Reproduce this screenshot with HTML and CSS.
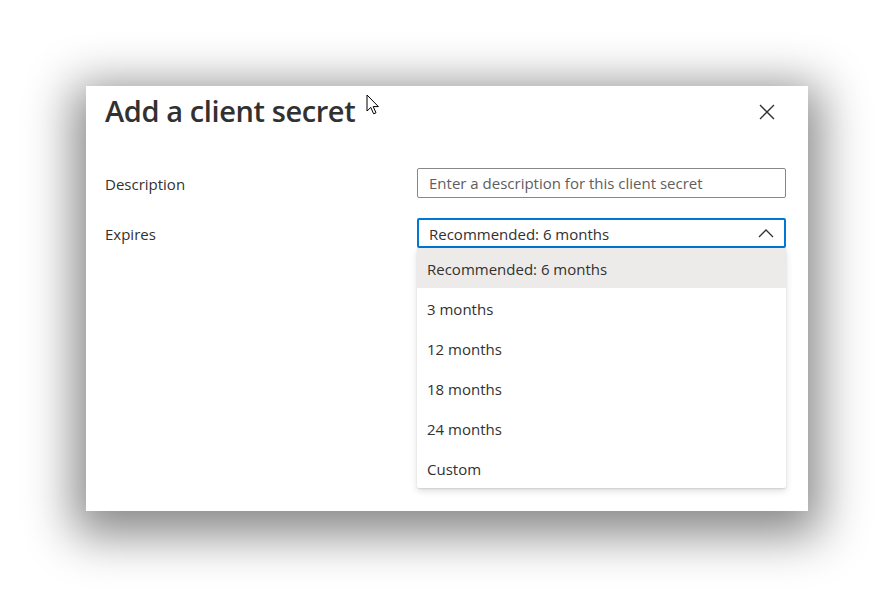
FILE: index.html
```html
<!DOCTYPE html>
<html>
<head>
<meta charset="utf-8">
<link rel="stylesheet" href="styles.css">
</head>
<body>
<div class="dialog">
  <div class="header">
    <h1 class="title">Add a client secret</h1>
    <button class="close" aria-label="Close">
      <svg width="16" height="16" viewBox="0 0 16 16"><path d="M1 1 L15 15 M15 1 L1 15" stroke="#323130" stroke-width="1.4" fill="none"/></svg>
    </button>
  </div>
  <div class="form">
    <div class="row">
      <div class="label">Description</div>
      <div class="field input">Enter a description for this client secret</div>
    </div>
    <div class="row">
      <div class="label">Expires</div>
      <div class="select-wrap">
        <div class="field select">
          <span>Recommended: 6 months</span>
          <svg class="chev" width="16" height="10" viewBox="0 0 16 10"><path d="M1 9 L8 2 L15 9" stroke="#323130" stroke-width="1.3" fill="none"/></svg>
        </div>
        <ul class="menu">
          <li class="opt selected">Recommended: 6 months</li>
          <li class="opt">3 months</li>
          <li class="opt">12 months</li>
          <li class="opt">18 months</li>
          <li class="opt">24 months</li>
          <li class="opt">Custom</li>
        </ul>
      </div>
    </div>
  </div>
  <svg class="cursor" width="14" height="22" viewBox="0 0 14 22"><path d="M1 1 L1 17 L4.8 13.4 L7.6 19.8 L10 18.8 L7.2 12.6 L12.4 12.6 Z" fill="#fff" stroke="#000" stroke-width="1"/></svg>
</div>
</body>
</html>
```

FILE: styles.css
```css
html, body {
  margin: 0;
  padding: 0;
  background: #ffffff;
  width: 894px;
  height: 597px;
  overflow: hidden;
}
body {
  padding-top: 86px;
  padding-left: 86px;
  box-sizing: border-box;
  font-family: "Open Sans", "Noto Sans", sans-serif;
  color: #323130;
}
.dialog {
  position: relative;
  width: 722px;
  height: 425px;
  background: #fff;
  box-shadow: 0 12px 45px 12px rgba(0,0,0,0.47);
  box-sizing: border-box;
  padding: 0 20px 0 19px;
}
.header {
  display: flex;
  justify-content: space-between;
  align-items: flex-start;
}
.title {
  margin: 5px 0 0 0;
  font-size: 29px;
  font-weight: 600;
  letter-spacing: -0.4px;
  line-height: 40px;
  color: #323130;
}
.close {
  border: 0;
  background: none;
  padding: 0;
  margin: 18px 13px 0 0;
  width: 16px;
  height: 16px;
  display: flex;
}
.form {
  margin-top: 37px;
  display: flex;
  flex-direction: column;
  gap: 20px;
}
.row {
  display: flex;
  align-items: flex-start;
  height: 30px;
}
.label {
  width: 312px;
  height: 30px;
  font-size: 15px;
  line-height: 32px;
  color: #323130;
}
.field {
  box-sizing: border-box;
  width: 369px;
  height: 30px;
  font-size: 15px;
  line-height: 29px;
  padding: 0 11px;
  border: 1px solid #8a8886;
  border-radius: 2px;
}
.input {
  color: #605e5c;
}
.select-wrap {
  position: relative;
}
.select {
  border: 2px solid #0078d4;
  line-height: 28px;
  padding: 0 10px;
  display: flex;
  justify-content: space-between;
  align-items: center;
}
.select span {
  line-height: 28px;
  padding-top: 2px;
}
.menu {
  position: absolute;
  top: 30px;
  left: 0;
  width: 369px;
  margin: 0;
  padding: 0;
  list-style: none;
  background: #fff;
  border-radius: 2px;
  box-shadow: 0 3px 7px rgba(0,0,0,0.13), 0 0.6px 1.8px rgba(0,0,0,0.11);
}
.opt {
  height: 40px;
  line-height: 42px;
  padding: 0 10px;
  font-size: 15px;
  color: #323130;
}
.opt.selected {
  background: #edebe9;
}
.cursor {
  position: absolute;
  left: 280px;
  top: 8px;
}
```
